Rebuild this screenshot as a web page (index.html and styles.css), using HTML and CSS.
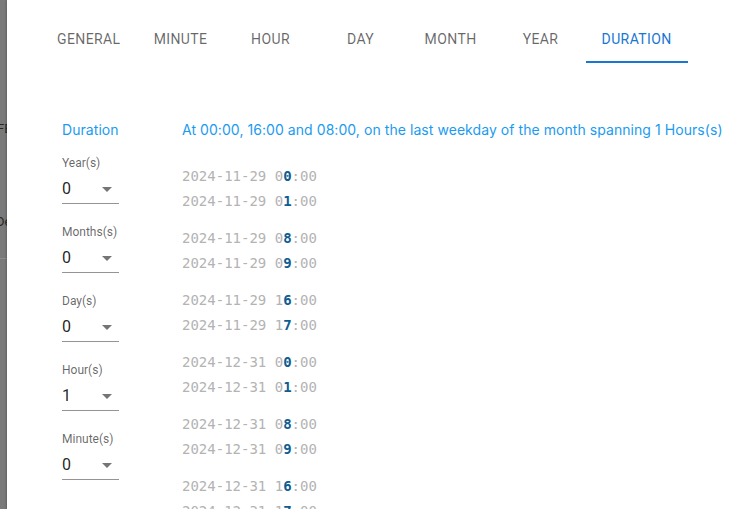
FILE: index.html
```html
<!DOCTYPE html>
<html>
<head>
<meta charset="utf-8">
<link rel="stylesheet" href="styles.css">
</head>
<body>
<div class="screen">
  <div class="under">
    <span class="u1">FE</span>
    <span class="u2">De</span>
    <div class="uline"></div>
  </div>
  <div class="dialog">
    <nav class="tabs">
      <div class="tab">General</div>
      <div class="tab">Minute</div>
      <div class="tab">Hour</div>
      <div class="tab">Day</div>
      <div class="tab">Month</div>
      <div class="tab">Year</div>
      <div class="tab active">Duration</div>
    </nav>
    <div class="content">
      <div class="fields">
        <div class="heading">Duration</div>
        <div class="field">
          <div class="label">Year(s)</div>
          <div class="select"><span class="value">0</span><svg class="arrow" viewBox="0 0 24 24" width="24" height="24"><path d="M7 10l5 5 5-5z"/></svg></div>
        </div>
        <div class="field">
          <div class="label">Months(s)</div>
          <div class="select"><span class="value">0</span><svg class="arrow" viewBox="0 0 24 24" width="24" height="24"><path d="M7 10l5 5 5-5z"/></svg></div>
        </div>
        <div class="field">
          <div class="label">Day(s)</div>
          <div class="select"><span class="value">0</span><svg class="arrow" viewBox="0 0 24 24" width="24" height="24"><path d="M7 10l5 5 5-5z"/></svg></div>
        </div>
        <div class="field">
          <div class="label">Hour(s)</div>
          <div class="select"><span class="value">1</span><svg class="arrow" viewBox="0 0 24 24" width="24" height="24"><path d="M7 10l5 5 5-5z"/></svg></div>
        </div>
        <div class="field">
          <div class="label">Minute(s)</div>
          <div class="select"><span class="value">0</span><svg class="arrow" viewBox="0 0 24 24" width="24" height="24"><path d="M7 10l5 5 5-5z"/></svg></div>
        </div>
      </div>
      <div class="results">
        <div class="summary">At 00:00, 16:00 and 08:00, on the last weekday of the month spanning 1 Hours(s)</div>
        <div class="group">
          <div class="row">2024-11-29 0<b>0</b>:00</div>
          <div class="row">2024-11-29 0<b>1</b>:00</div>
        </div>
        <div class="group">
          <div class="row">2024-11-29 0<b>8</b>:00</div>
          <div class="row">2024-11-29 0<b>9</b>:00</div>
        </div>
        <div class="group">
          <div class="row">2024-11-29 1<b>6</b>:00</div>
          <div class="row">2024-11-29 1<b>7</b>:00</div>
        </div>
        <div class="group">
          <div class="row">2024-12-31 0<b>0</b>:00</div>
          <div class="row">2024-12-31 0<b>1</b>:00</div>
        </div>
        <div class="group">
          <div class="row">2024-12-31 0<b>8</b>:00</div>
          <div class="row">2024-12-31 0<b>9</b>:00</div>
        </div>
        <div class="group">
          <div class="row">2024-12-31 1<b>6</b>:00</div>
          <div class="row">2024-12-31 1<b>7</b>:00</div>
        </div>
      </div>
    </div>
  </div>
</div>
</body>
</html>
```

FILE: styles.css
```css
html, body {
  margin: 0;
  padding: 0;
  width: 749px;
  height: 509px;
  overflow: hidden;
  background: #ffffff;
}

.screen {
  display: flex;
  width: 749px;
  height: 509px;
  overflow: hidden;
  font-family: Roboto, "Liberation Sans", sans-serif;
}

.under {
  width: 7px;
  flex: none;
  background: #7a7a7a;
  display: flex;
  flex-direction: column;
  align-items: flex-start;
  overflow: hidden;
  font-size: 13px;
  color: #262626;
  white-space: nowrap;
}

.u1 {
  margin-top: 121px;
  margin-left: -3px;
  line-height: 16px;
}

.u2 {
  margin-top: 77px;
  margin-left: -4px;
  line-height: 16px;
}

.uline {
  margin-top: 28px;
  width: 7px;
  height: 1px;
  flex: none;
  background: #8c8c8c;
}

.dialog {
  flex: 1;
  background: #ffffff;
  box-shadow: -1px 0 2px rgba(0, 0, 0, 0.2);
  display: flex;
  flex-direction: column;
  overflow: hidden;
}

.tabs {
  display: flex;
  flex: none;
  margin-top: 15px;
  padding-left: 33px;
  height: 48px;
  box-sizing: border-box;
}

.tab {
  min-width: 90px;
  box-sizing: border-box;
  padding: 2px 16px 0;
  display: flex;
  align-items: center;
  justify-content: center;
  font-size: 14px;
  font-weight: 400;
  letter-spacing: 0.4px;
  text-transform: uppercase;
  color: rgba(0, 0, 0, 0.6);
  border-bottom: 2px solid transparent;
}

.tab:first-child {
  padding-left: 17px;
  padding-right: 15px;
}

.tab.active {
  color: #1976d2;
  border-bottom-color: #1976d2;
}

.content {
  display: flex;
  flex: none;
  padding-left: 55px;
  margin-top: 58px;
}

.fields {
  width: 120px;
  flex: none;
  display: flex;
  flex-direction: column;
}

.heading, .summary {
  font-family: Inter, "Noto Sans", sans-serif;
  font-size: 14px;
  line-height: 18px;
  color: #1b9bef;
  white-space: nowrap;
  letter-spacing: 0.06px;
}

.heading {
  margin-bottom: 16px;
}

.field {
  width: 57px;
  margin-bottom: 20px;
}

.label {
  font-size: 12px;
  line-height: 16px;
  color: rgba(0, 0, 0, 0.6);
}

.select {
  display: flex;
  align-items: flex-start;
  height: 33px;
  box-sizing: border-box;
  border-bottom: 1px solid rgba(0, 0, 0, 0.42);
}

.value {
  flex: 1;
  font-size: 16px;
  line-height: 23px;
  padding-top: 6px;
  color: rgba(0, 0, 0, 0.87);
}

.arrow {
  flex: none;
  margin-top: 6px;
  fill: rgba(0, 0, 0, 0.54);
}

.results {
  display: flex;
  flex-direction: column;
}

.summary {
  margin-bottom: 25px;
}

.group {
  margin-bottom: 12px;
}

.row {
  font-family: "DejaVu Sans Mono", "Liberation Mono", monospace;
  font-size: 14px;
  line-height: 25px;
  color: #b3b3b3;
  white-space: nowrap;
}

.row b {
  color: #0f5c91;
  font-weight: 700;
}
```
